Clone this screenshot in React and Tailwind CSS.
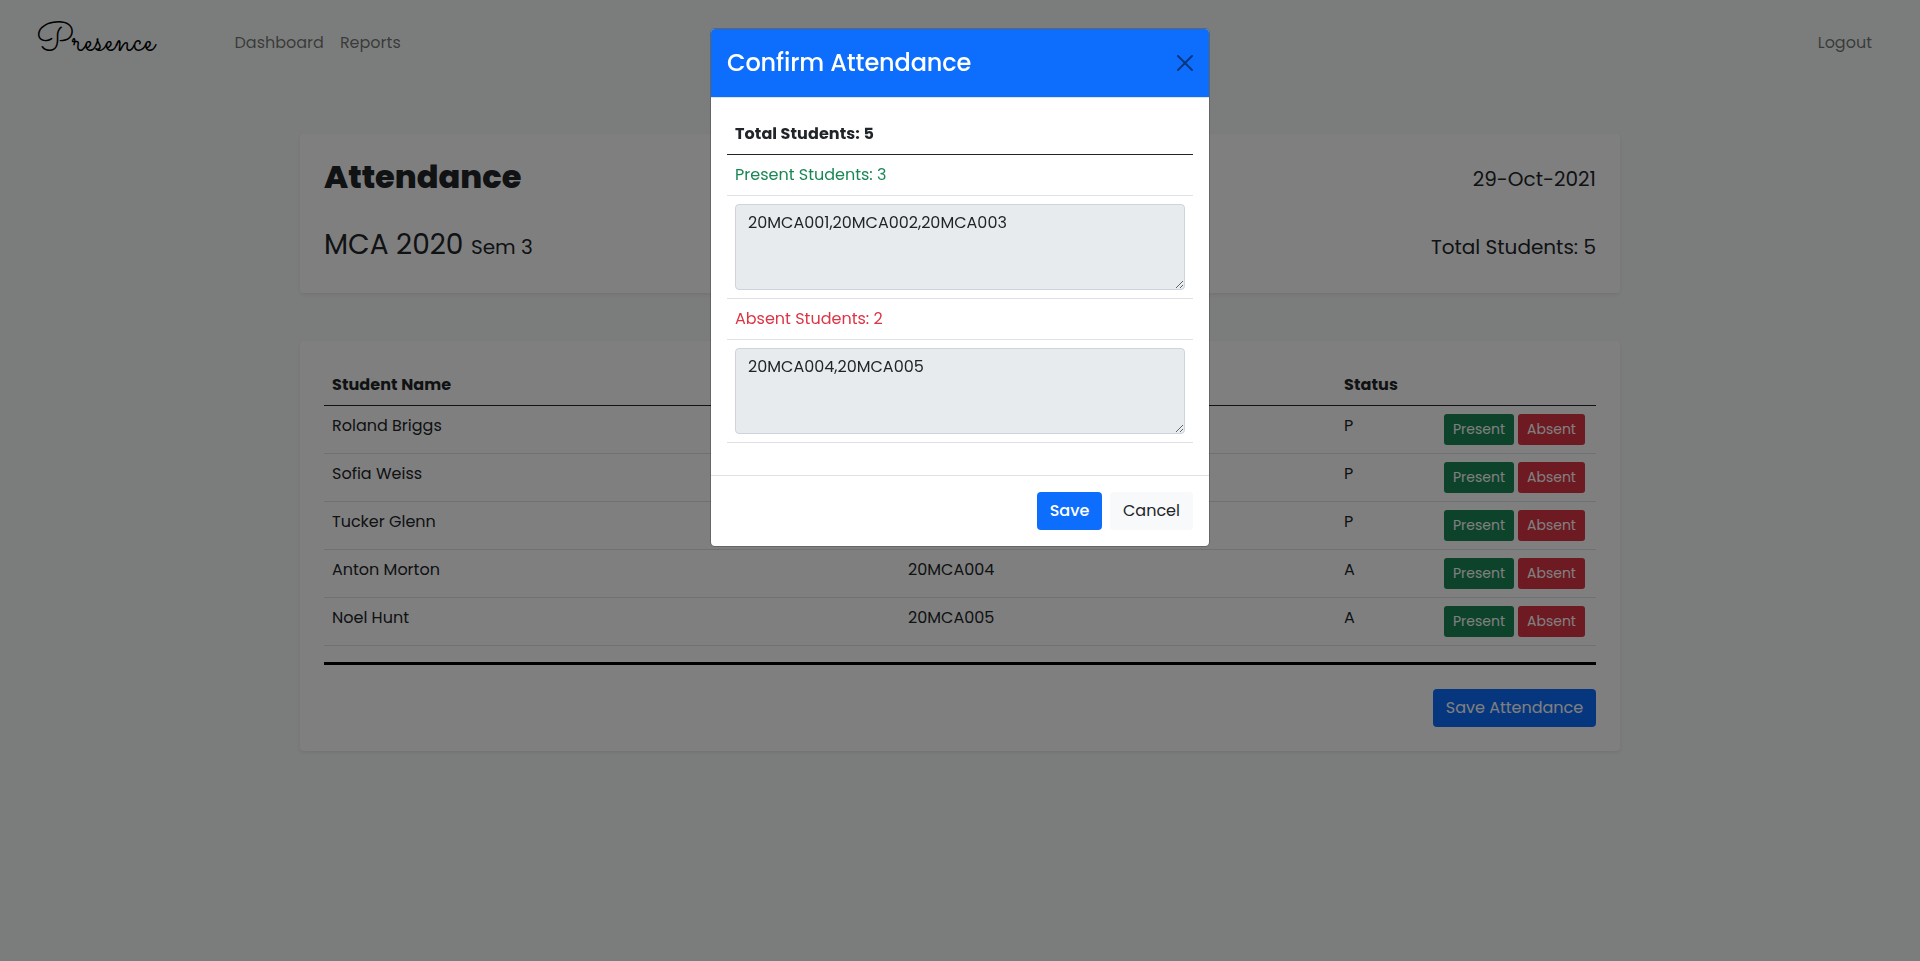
import React from "react";

const students = [
  { name: "Roland Briggs", roll: "20MCA001", status: "P" },
  { name: "Sofia Weiss", roll: "20MCA002", status: "P" },
  { name: "Tucker Glenn", roll: "20MCA003", status: "P" },
  { name: "Anton Morton", roll: "20MCA004", status: "A" },
  { name: "Noel Hunt", roll: "20MCA005", status: "A" },
];

const columns = "grid grid-cols-[576px_436px_100px_160px]";

function Navbar() {
  return (
    <nav className="flex h-[84px] items-center pr-12 pl-9 text-black/55">
      <a className="w-[198.5px] font-[Sacramento,cursive] text-[40px] leading-[60px] text-black">Presence</a>
      <a className="mr-4 pt-px">Dashboard</a>
      <a className="pt-px">Reports</a>
      <a className="ml-auto pt-px">Logout</a>
    </nav>
  );
}

function Summary() {
  return (
    <section className="mt-[50px] h-[159px] w-[1320px] rounded bg-white p-6 shadow-[0_2px_4px_rgba(0,0,0,0.075)]">
      <div className="flex h-[70px] items-start justify-between">
        <h1 className="text-[32px] leading-[38px] font-extrabold">Attendance</h1>
        <span className="pt-[6px] text-xl leading-[30px]">29-Oct-2021</span>
      </div>
      <div className="flex items-baseline justify-between">
        <div className="text-[28px] leading-[34px]">
          MCA 2020 <span className="text-xl">Sem 3</span>
        </div>
        <span className="text-xl">Total Students: 5</span>
      </div>
    </section>
  );
}

function StudentTable() {
  return (
    <section className="mt-12 w-[1320px] rounded bg-white p-6 shadow-[0_2px_4px_rgba(0,0,0,0.075)]">
      <div className={`${columns} border-b border-[#212529] font-bold tracking-[0.08px]`}>
        <span className="p-2">Student Name</span>
        <span className="p-2">Roll Number</span>
        <span className="p-2">Status</span>
        <span />
      </div>
      {students.map((s) => (
        <div key={s.roll} className={`${columns} h-12 border-b border-[#dee2e6]`}>
          <span className="p-2">{s.name}</span>
          <span className="p-2">{s.roll}</span>
          <span className="p-2">{s.status}</span>
          <span className="flex gap-1 p-2 text-sm text-white">
            <button className="h-[31px] w-[70px] rounded-[3px] bg-[#198754] pb-px">Present</button>
            <button className="h-[31px] w-[67px] rounded-[3px] bg-[#dc3545] pb-px">Absent</button>
          </span>
        </div>
      ))}
      <hr className="mt-4 mb-6 h-[3px] border-0 bg-black" />
      <div className="flex justify-end">
        <button className="h-[38px] w-[163px] rounded bg-[#0d6efd] text-white">Save Attendance</button>
      </div>
    </section>
  );
}

function RollList({ value }) {
  return (
    <div className="border-b border-[#dee2e6] p-2">
      <textarea
        readOnly
        defaultValue={value}
        className="block h-[86px] w-full resize rounded border border-[#ced4da] bg-[#e7ebee] px-3 py-1.5 leading-6 text-[#212529] outline-none"
      />
    </div>
  );
}

function ConfirmDialog() {
  return (
    <div className="fixed inset-0 flex items-start justify-center bg-black/50 pt-7">
      <div className="w-[500px] rounded-[5px] border border-black/20 bg-white bg-clip-padding">
        <header className="flex h-[69px] items-center justify-between rounded-t-[4px] border-b border-[#dee2e6] bg-[#0d6efd] px-4">
          <h2 className="text-2xl leading-9 font-medium tracking-[-0.12px] text-white">Confirm Attendance</h2>
          <svg viewBox="0 0 16 16" className="size-4 opacity-50" fill="#000">
            <path d="M.293.293a1 1 0 0 1 1.414 0L8 6.586 14.293.293a1 1 0 1 1 1.414 1.414L9.414 8l6.293 6.293a1 1 0 0 1-1.414 1.414L8 9.414l-6.293 6.293a1 1 0 0 1-1.414-1.414L6.586 8 .293 1.707a1 1 0 0 1 0-1.414z" />
          </svg>
        </header>
        <div className="px-4 pt-4 pb-8">
          <div className="border-b border-[#212529] p-2 font-bold tracking-[0.08px]">Total Students: 5</div>
          <div className="border-b border-[#dee2e6] p-2 text-[#198754]">Present Students: 3</div>
          <RollList value="20MCA001,20MCA002,20MCA003" />
          <div className="border-b border-[#dee2e6] p-2 text-[#dc3545]">Absent Students: 2</div>
          <RollList value="20MCA004,20MCA005" />
        </div>
        <footer className="flex h-[71px] items-center justify-end gap-2 border-t border-[#dee2e6] px-4">
          <button className="h-[38px] w-[65px] rounded bg-[#0d6efd] font-medium text-white">Save</button>
          <button className="h-[38px] w-[83px] rounded bg-[#f8f9fa] text-[#212529]">Cancel</button>
        </footer>
      </div>
    </div>
  );
}

export default function App() {
  return (
    <div className="h-[961px] overflow-hidden bg-[#f7faf8] font-[Poppins,Inter,sans-serif] text-base text-[#212529]">
      <Navbar />
      <main className="flex flex-col items-center">
        <Summary />
        <StudentTable />
      </main>
      <ConfirmDialog />
    </div>
  );
}
